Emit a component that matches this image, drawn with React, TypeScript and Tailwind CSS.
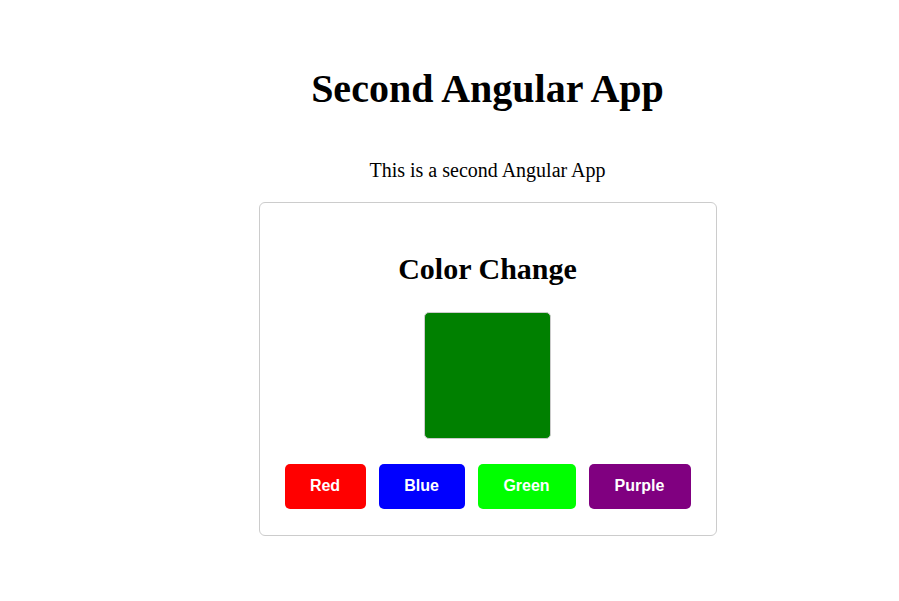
import { useState } from "react";

const colors = [
  { name: "Red", value: "#ff0000", btn: "bg-[#ff0000] w-[81px]" },
  { name: "Blue", value: "#0000ff", btn: "bg-[#0000ff] w-[86px]" },
  { name: "Green", value: "#00ff00", btn: "bg-[#00ff00] w-[98px]" },
  { name: "Purple", value: "#800080", btn: "bg-[#800080] w-[102px]" },
];

export default function App() {
  const [color, setColor] = useState("#008000");

  return (
    <div className="min-h-[601px] bg-white pl-[76px] flex flex-col items-center font-['Liberation_Serif',serif] text-black">
      <h1 className="mt-[66px] text-[40px] leading-[46px] font-bold">Second Angular App</h1>
      <p className="mt-[47px] text-[20px] leading-[23px]">This is a second Angular App</p>

      {/* card */}
      <div className="mt-[20px] w-[458px] h-[334px] border border-[#cccccc] rounded-[6px] flex flex-col items-center">
        <h2 className="mt-[48px] text-[30px] leading-[35px] font-bold">Color Change</h2>
        <div
          className="mt-[26px] w-[127px] h-[127px] border border-[#cccccc] rounded-[5px]"
          style={{ backgroundColor: color }}
        />
        <div className="mt-[25px] flex gap-[13px]">
          {colors.map((c) => (
            <button
              key={c.name}
              onClick={() => setColor(c.value)}
              className={`${c.btn} h-[45px] pb-[1px] rounded-[5px] text-white text-[16px] font-bold font-['Liberation_Sans',Arial,sans-serif] cursor-pointer`}
            >
              {c.name}
            </button>
          ))}
        </div>
      </div>
    </div>
  );
}
